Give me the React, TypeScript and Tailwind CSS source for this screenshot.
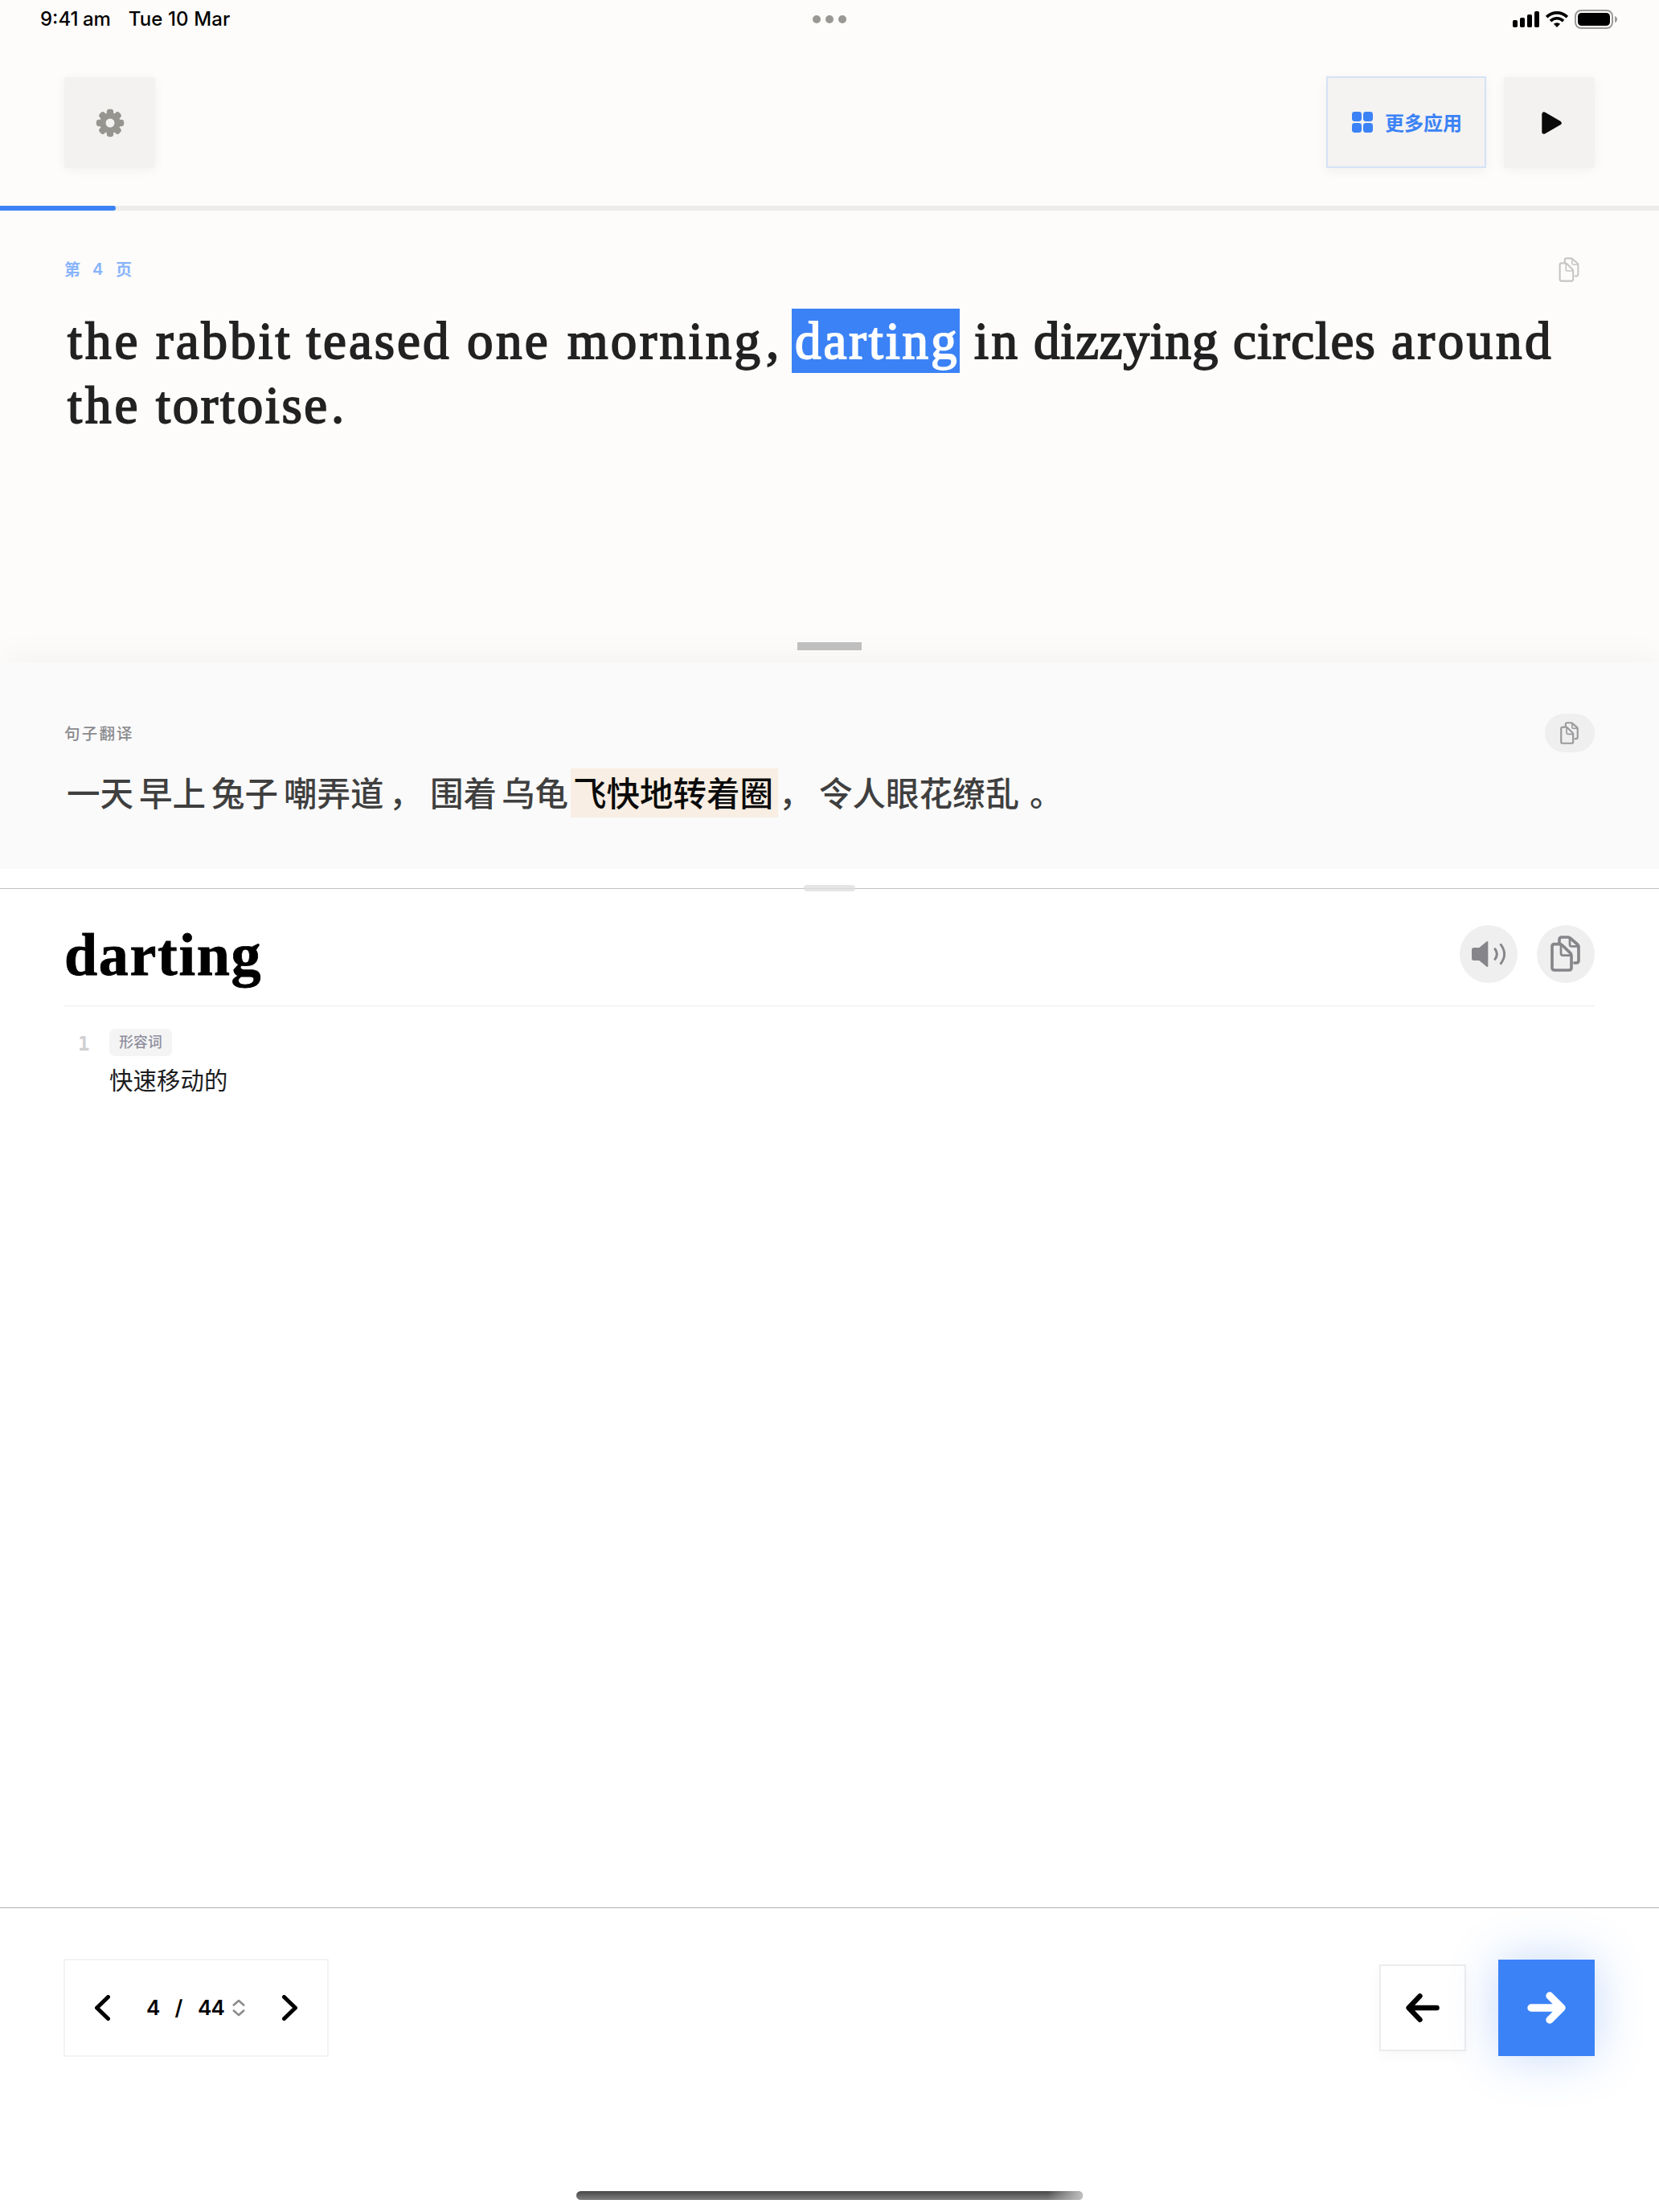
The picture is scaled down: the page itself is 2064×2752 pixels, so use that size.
import { clsx } from "clsx";

type Word = { text: string; box: string; active?: boolean };

const LINES: Word[][] = [
  [
    { text: "the", box: "w-[96px] tracking-[4px]" },
    { text: "rabbit", box: "ml-[14px] w-[174px] tracking-[3px]" },
    { text: "teased", box: "ml-[13px] w-[184px] tracking-[3px]" },
    { text: "one", box: "ml-[16px] w-[107px] tracking-[3.4px]" },
    { text: "morning", box: "ml-[18px] w-[249px] tracking-[3.3px]" },
    { text: ",", box: "-ml-[2px] w-[28px]" },
    { text: "darting", box: "ml-[8px] w-[209px] tracking-[2.9px]", active: true },
    { text: "in", box: "ml-[14px] w-[62px] tracking-[3.5px]" },
    { text: "dizzying", box: "ml-[12px] w-[234px] tracking-[0.8px]" },
    { text: "circles", box: "ml-[14px] w-[182px] tracking-[1.2px]" },
    { text: "around", box: "ml-[15px] w-[207px] tracking-[3.6px]" },
  ],
  [
    { text: "the", box: "w-[96px] tracking-[4px]" },
    { text: "tortoise", box: "ml-[14px] w-[219px] tracking-[2.6px]" },
    { text: ".", box: "-ml-px w-[24px]" },
  ],
];

const TRANSLATION: Word[] = [
  { text: "一天", box: "w-[90px]" },
  { text: "早上", box: "w-[90px]" },
  { text: "兔子", box: "w-[90px]" },
  { text: "嘲弄道", box: "w-[131px]" },
  { text: "，", box: "w-[51px]" },
  { text: "围着", box: "w-[89px]" },
  { text: "乌龟", box: "w-[89px]" },
  { text: "飞快地转着圈", box: "w-[258px]", active: true },
  { text: "，", box: "-ml-[2px] w-[50px]" },
  { text: "令人眼花缭乱", box: "w-[258px]" },
  { text: "。", box: "ml-[4px] w-[48px]" },
];

const CJK = "font-['Noto_Sans_CJK_SC',sans-serif]";
const INTER = "font-['Inter',sans-serif]";

function CopyIcon({ className, weight = 11 }: { className: string; weight?: number }) {
  return (
    <svg viewBox="0 0 111 135" fill="none" stroke="currentColor" strokeWidth={weight} strokeLinejoin="round" className={className}>
      <path d="M33 29V15q0-9 9-9H66q4 0 7 3L101 33q4 4 4 9V93q0 9-9 9H85" />
      <path d="M72 8V33q0 7 7 7h25" strokeWidth={weight * 0.75} />
      <path d="M15 32H35q5 0 9 4L74 65q4 4 4 9v46q0 9-9 9H15q-9 0-9-9V41q0-9 9-9Z" />
      <path d="M39 34V66q0 8 8 8H77" strokeWidth={weight * 0.75} />
    </svg>
  );
}

function GearIcon() {
  return (
    <svg viewBox="0 0 36 36" className="size-9 text-[#969590]">
      <g fill="currentColor">
        {[0, 45, 90, 135].map((deg) => (
          <rect key={deg} x="13.8" y="0.8" width="8.4" height="34.4" rx="3.4" transform={`rotate(${deg} 18 18)`} />
        ))}
        <circle cx="18" cy="18" r="12.8" />
      </g>
      <circle cx="18" cy="18" r="5.5" fill="#f3f2f1" />
    </svg>
  );
}

function GridIcon() {
  return (
    <svg viewBox="0 0 26 26" fill="currentColor" className="size-[26px]">
      <rect width="12" height="12" rx="3.4" />
      <rect x="14" width="12" height="12" rx="3.4" />
      <rect y="14" width="12" height="12" rx="3.4" />
      <rect x="14" y="14" width="12" height="12" rx="3.4" />
    </svg>
  );
}

function StatusBar() {
  return (
    <div className="relative flex h-[48px] items-center justify-between pl-[50px] pr-[51px] font-['Inter',sans-serif] text-2xl font-medium text-black">
      <div className="flex gap-[22px]">
        <span className="[word-spacing:-1px]">9:41 am</span>
        <span className="tracking-[0.1px]">Tue 10 Mar</span>
      </div>
      <div className="absolute left-1/2 top-[19px] flex -translate-x-1/2 gap-1.5">
        <i className="size-2.5 rounded-full bg-[#999894]" />
        <i className="size-2.5 rounded-full bg-[#999894]" />
        <i className="size-2.5 rounded-full bg-[#999894]" />
      </div>
      <div className="flex items-center gap-[8px]">
        <svg viewBox="0 0 33 20" fill="currentColor" className="h-[20px] w-[33px]">
          <rect y="11" width="6" height="9" rx="1.8" />
          <rect x="9" y="8" width="6" height="12" rx="1.8" />
          <rect x="18" y="4" width="6" height="16" rx="1.8" />
          <rect x="27" width="6" height="20" rx="1.8" />
        </svg>
        <svg viewBox="0 0 28 20" fill="none" stroke="currentColor" strokeWidth="3.6" className="h-[20px] w-[28px]">
          <path d="M1.2 7.1a18.2 18.2 0 0 1 25.6 0" />
          <path d="M6 12.1a11.4 11.4 0 0 1 16 0" />
          <path d="M14 20l-4.1-4.2a5.9 5.9 0 0 1 8.2 0Z" fill="currentColor" stroke="none" />
        </svg>
        <svg viewBox="0 0 54 24" className="h-[24px] w-[54px]">
          <rect x="1" y="1" width="46" height="22" rx="7" fill="none" stroke="#9b9a98" strokeWidth="2" />
          <rect x="4" y="4" width="40" height="16" rx="4.6" fill="#000" />
          <path d="M50 8v8q3-1 3-4t-3-4Z" fill="#9b9a98" />
        </svg>
      </div>
    </div>
  );
}

function Toolbar() {
  return (
    <div className="flex h-[208px] items-start justify-between px-20 pt-12">
      <button className="flex size-[113px] items-center justify-center rounded-[3px] bg-[#f3f2f1] shadow-[0_2px_14px_rgba(0,0,0,0.05)]">
        <GearIcon />
      </button>
      <div className="flex gap-[22px]">
        <button className="-mt-px flex h-[114px] w-[199px] items-center border-2 border-[#d5e1f6] bg-[#f4f3f1] pl-[30px] text-[#3b82f6] shadow-[0_4px_14px_rgba(0,0,0,0.05)]">
          <GridIcon />
          <span className={clsx(CJK, "ml-[15px] whitespace-nowrap text-[24px] font-bold leading-none")}>更多应用</span>
        </button>
        <button className="flex size-[113px] items-center justify-center rounded-[3px] bg-[#f3f2f1] shadow-[0_2px_14px_rgba(0,0,0,0.05)]">
          <svg viewBox="0 0 25 28" className="ml-[6px] h-[28px] w-[25px]">
            <path d="M3 3v22L22 14Z" fill="#0a0a0a" stroke="#0a0a0a" strokeWidth="5.4" strokeLinejoin="round" />
          </svg>
        </button>
      </div>
    </div>
  );
}

function ReadingPane() {
  return (
    <section className="relative flex h-[562px] flex-col px-20">
      <div className="flex h-[146px] items-center justify-between pr-[19px]">
        <div className={clsx(CJK, "flex items-center text-xl font-bold leading-none text-[#89b4fa]")}>
          <span>第</span>
          <span className={clsx(INTER, "ml-[15px] w-3 font-semibold")}>4</span>
          <span className="ml-[17px]">页</span>
        </div>
        <CopyIcon className="h-[31px] w-[26px] text-[#c6c5c4]" weight={9} />
      </div>
      <div className="-mt-[24px] font-['Liberation_Serif',serif] text-[65px] leading-[80px] text-[#222] [-webkit-text-stroke:1.8px]">
        {LINES.map((line, i) => (
          <div key={i} className="flex">
            {line.map((w, j) => (
              <span
                key={j}
                className={clsx("h-20 shrink-0 whitespace-nowrap px-1", w.box, w.active && "bg-[#3b82f6] text-white")}
              >
                {w.text}
              </span>
            ))}
          </div>
        ))}
      </div>
      <div className="absolute bottom-[15px] left-1/2 z-10 h-2.5 w-20 -translate-x-1/2 bg-[#c0bfbf]" />
    </section>
  );
}

function TranslationPane() {
  return (
    <section className="h-[257px] bg-[#fafafa] px-20 pt-16 shadow-[0_-8px_40px_rgba(0,0,0,0.04)]">
      <div className="flex h-12 items-center justify-between">
        <span className={clsx(CJK, "pb-px text-[19.5px] font-medium leading-none tracking-[2.2px] text-[#8a8a8e]")}>句子翻译</span>
        <button className="flex h-12 w-[62px] items-center justify-center rounded-[24px] bg-[#efefef] pr-px">
          <CopyIcon className="h-[28px] w-[23px] text-[#9a9a9d]" weight={10.5} />
        </button>
      </div>
      <div className={clsx(CJK, "mt-5 flex text-[41.5px] font-medium leading-[58px] text-[#3f3f3f]")}>
        {TRANSLATION.map((w, i) => (
          <span key={i} className={clsx("h-[61px] shrink-0 whitespace-nowrap px-[3px]", w.box, w.active && "bg-[#f8eee3] text-[#0a0a0a]")}>
            {w.text}
          </span>
        ))}
      </div>
    </section>
  );
}

function SpeakerIcon() {
  return (
    <svg viewBox="0 0 126 96" className="h-[32px] w-[42px]">
      <path d="M8 27H29L58 3V93L29 69H8q-5 0-5-5V32q0-5 5-5Z" fill="currentColor" stroke="currentColor" strokeWidth="6" strokeLinejoin="round" />
      <path d="M87 29q14 19 0 38M109 13q26 35 0 70" fill="none" stroke="currentColor" strokeWidth="9" strokeLinecap="round" />
    </svg>
  );
}

function DictionaryPane() {
  return (
    <section className="relative h-[1292px] bg-white pt-[24px]">
      <div className="h-px bg-[#c2c2c2]" />
      <div className="absolute left-1/2 top-[20px] h-2 w-16 -translate-x-1/2 rounded bg-[#dedede]/80" />
      <div className="mx-20 flex h-[146px] items-center justify-between border-b border-[#ebebeb] pt-[16px]">
        <h1 className="pt-[3px] font-['Liberation_Serif',serif] text-[74px] font-bold leading-none tracking-[1.7px] text-black [-webkit-text-stroke:0.8px]">
          darting
        </h1>
        <div className="flex gap-6 text-[#86868a]">
          <button className="flex size-[72px] items-center justify-center rounded-full bg-[#efefef]">
            <SpeakerIcon />
          </button>
          <button className="flex size-[72px] items-center justify-center rounded-full bg-[#efefef] pr-px">
            <CopyIcon className="h-[45px] w-[37px]" />
          </button>
        </div>
      </div>
      <div className="flex px-20 pt-7">
        <span className="w-[56px] pl-[17px] pt-[3px] font-['DejaVu_Sans_Mono',monospace] text-2xl font-bold leading-8 text-[#d0d0d2]">1</span>
        <div className={CJK}>
          <div className="flex h-[34px] w-[78px] items-center justify-center rounded-[7px] bg-[#f4f4f4] pb-[2px] text-[17.8px] font-medium leading-none text-[#8e8e9e]">
            形容词
          </div>
          <div className="mt-[7px] text-[29.3px] leading-[42px] tracking-[0.2px] text-[#1c1c1e]">快速移动的</div>
        </div>
      </div>
    </section>
  );
}

function Footer() {
  return (
    <footer className="relative h-[379px] border-t border-[#b3b3b3] bg-white pl-[79px] pr-20 pt-[63px]">
      <div className="flex h-[122px] items-center justify-between">
        <div className="flex h-[122px] w-[330px] items-center border-2 border-[#f3f3f3] pl-[37px] text-black">
          <svg viewBox="0 0 19 32" fill="none" stroke="currentColor" strokeWidth="5" strokeLinecap="round" strokeLinejoin="round" className="h-[32px] w-[19px]">
            <path d="M16.5 2.5 2.5 16l14 13.5" />
          </svg>
          <div className={clsx(INTER, "ml-[45px] flex text-[26px] font-semibold leading-none tracking-[-0.9px]")}>
            <span className="w-[16px]">4</span>
            <span className="w-[48px] text-center">/</span>
            <span className="w-[32px]">44</span>
          </div>
          <svg viewBox="0 0 16 22" fill="none" stroke="#8c8c8c" strokeWidth="2.6" strokeLinecap="round" strokeLinejoin="round" className="ml-[11px] h-[22px] w-[16px]">
            <path d="M1.8 7.5 8 2l6.2 5.5M1.8 14.5 8 20l6.2-5.5" />
          </svg>
          <svg viewBox="0 0 19 32" fill="none" stroke="currentColor" strokeWidth="5" strokeLinecap="round" strokeLinejoin="round" className="ml-[46px] h-[32px] w-[19px]">
            <path d="m2.5 2.5 14 13.5-14 13.5" />
          </svg>
        </div>
        <div className="flex items-center gap-10">
          <button className="flex size-[108px] items-center justify-center border-2 border-[#ececec] bg-white text-black shadow-[0_4px_16px_rgba(0,0,0,0.04)]">
            <svg viewBox="0 0 42 36" fill="none" stroke="currentColor" strokeWidth="6.4" strokeLinecap="round" strokeLinejoin="round" className="h-[36px] w-[42px]">
              <path d="M38.6 18H4M17.5 3.4 3.6 18l13.9 14.6" />
            </svg>
          </button>
          <button className="flex size-[120px] items-center justify-center bg-[#3b82f6] text-white shadow-[0_0_60px_rgba(59,130,246,0.3)]">
            <svg viewBox="0 0 48 40" fill="none" stroke="currentColor" strokeWidth="9.4" strokeLinecap="round" strokeLinejoin="round" className="h-[40px] w-[48px]">
              <path d="M5 20h38M28 5l15 15-15 15" />
            </svg>
          </button>
        </div>
      </div>
      <div className="absolute bottom-[15px] left-1/2 h-[11px] w-[630px] -translate-x-1/2 overflow-hidden rounded-full bg-linear-to-b from-[#484848] to-[#808080]">
        <div className="ml-auto h-full w-[44px] bg-linear-to-r from-[#c0c0c0]/0 to-[#c0c0c0]" />
      </div>
    </footer>
  );
}

export default function App() {
  return (
    <main className="h-[2752px] w-[2064px] overflow-hidden bg-[#fdfcfa]">
      <StatusBar />
      <Toolbar />
      <div className="h-1.5 bg-[#edeceb]">
        <div className="h-full w-[144px] rounded-r-full bg-[#3b82f6]" />
      </div>
      <ReadingPane />
      <TranslationPane />
      <DictionaryPane />
      <Footer />
    </main>
  );
}
